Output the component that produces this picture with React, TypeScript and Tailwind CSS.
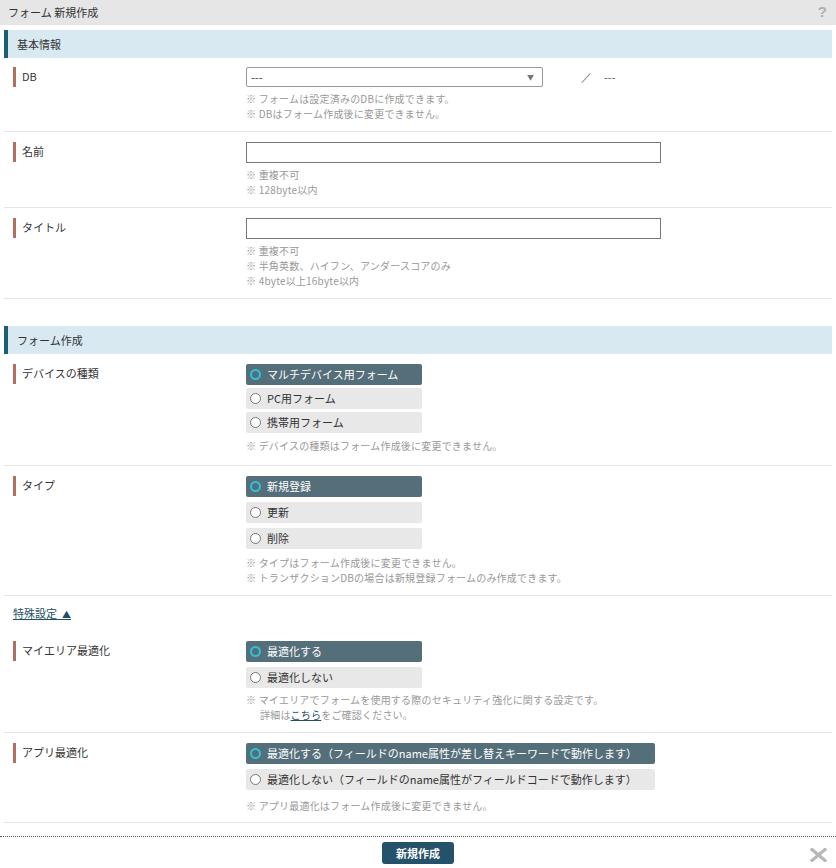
import React, { useState } from "react";

interface RadioOpt {
  label: string;
}

function Radio({
  label,
  checked,
  width,
  onClick,
}: {
  label: string;
  checked: boolean;
  width: string;
  onClick: () => void;
}) {
  return (
    <div
      onClick={onClick}
      className={`${width} h-[21px] flex items-center pl-[4px] rounded-[2px] cursor-pointer ${
        checked ? "bg-[#546e7a] text-white" : "bg-[#e8e8e8] text-[#333]"
      }`}
    >
      <span
        className={`w-[11px] h-[11px] rounded-full shrink-0 ${
          checked ? "border-2 border-[#2cc5d8] bg-transparent" : "border border-[#777] bg-white"
        }`}
      ></span>
      <span className="ml-[6px] leading-[21px]">{label}</span>
    </div>
  );
}

function Label({ text }: { text: string }) {
  return (
    <div className="w-[242px] pl-[9px] shrink-0">
      <div className="border-l-[3px] border-[#b26f5e] pl-[6px] h-[20px] leading-[19px]">{text}</div>
    </div>
  );
}

function Notes({ lines, mt = "mt-[4px]" }: { lines: React.ReactNode[]; mt?: string }) {
  return (
    <div className={`${mt} text-[10px] text-[#999] leading-[15px] tracking-[0.2px]`}>
      {lines.map((l, i) => (
        <div key={i}>{l}</div>
      ))}
    </div>
  );
}

function Section({ title, className = "" }: { title: string; className?: string }) {
  return (
    <div className={`h-[28px] bg-[#d9e9f1] border-l-4 border-[#1b5e74] pl-[9px] flex items-center ${className}`}>
      {title}
    </div>
  );
}

function RadioGroup({
  opts,
  width,
  gap,
}: {
  opts: RadioOpt[];
  width: string;
  gap: string;
}) {
  const [sel, setSel] = useState(0);
  return (
    <div className={`flex flex-col ${gap}`}>
      {opts.map((o, i) => (
        <Radio key={o.label} label={o.label} checked={sel === i} width={width} onClick={() => setSel(i)} />
      ))}
    </div>
  );
}

export default function App() {
  const [name, setName] = useState("");
  const [title, setTitle] = useState("");

  return (
    <div className="w-full min-h-screen bg-white text-[11px] text-[#333] font-['Noto_Sans_CJK_JP','Noto_Sans',sans-serif]">
      <div className="h-[25px] bg-[#e6e6e6] flex items-center justify-between pl-[8px] pr-[9px]">
        <span>フォーム 新規作成</span>
        <span className="text-[15px] font-bold text-[#b0b0b0] font-['Liberation_Sans',sans-serif]">?</span>
      </div>

      <div className="px-[4px] pt-[5px]">
        <Section title="基本情報" />

        <div className="flex border-b border-[#e5e5e5] pt-[9px] pb-[10px]">
          <Label text="DB" />
          <div>
            <div className="flex items-center">
              <div className="w-[297px] h-[20px] border border-[#999] rounded-[2px] flex items-center justify-between pl-[4px] pr-[8px]">
                <span>---</span>
                <span className="text-[7px] text-[#777]">▼</span>
              </div>
              <span className="ml-[38px] text-[#666] font-['Liberation_Sans',sans-serif]">／</span>
              <span className="ml-[12px] text-[#555]">---</span>
            </div>
            <Notes lines={["※ フォームは設定済みのDBに作成できます。", "※ DBはフォーム作成後に変更できません。"]} />
          </div>
        </div>

        <div className="flex border-b border-[#e5e5e5] pt-[10px] pb-[10px]">
          <Label text="名前" />
          <div>
            <input
              className="w-[415px] h-[21px] border border-[#777] outline-none px-[4px] block"
              value={name}
              onChange={(e) => setName(e.target.value)}
            />
            <Notes lines={["※ 重複不可", "※ 128byte以内"]} />
          </div>
        </div>

        <div className="flex border-b border-[#e5e5e5] pt-[10px] pb-[10px]">
          <Label text="タイトル" />
          <div>
            <input
              className="w-[415px] h-[21px] border border-[#777] outline-none px-[4px] block"
              value={title}
              onChange={(e) => setTitle(e.target.value)}
            />
            <Notes
              lines={["※ 重複不可", "※ 半角英数、ハイフン、アンダースコアのみ", "※ 4byte以上16byte以内"]}
            />
          </div>
        </div>

        <Section title="フォーム作成" className="mt-[27px]" />

        <div className="flex border-b border-[#e5e5e5] pt-[10px] pb-[12px]">
          <Label text="デバイスの種類" />
          <div>
            <RadioGroup
              width="w-[176px]"
              gap="gap-[3px]"
              opts={[{ label: "マルチデバイス用フォーム" }, { label: "PC用フォーム" }, { label: "携帯用フォーム" }]}
            />
            <Notes mt="mt-[5px]" lines={["※ デバイスの種類はフォーム作成後に変更できません。"]} />
          </div>
        </div>

        <div className="flex border-b border-[#e5e5e5] pt-[10px] pb-[10px]">
          <Label text="タイプ" />
          <div>
            <RadioGroup
              width="w-[176px]"
              gap="gap-[5px]"
              opts={[{ label: "新規登録" }, { label: "更新" }, { label: "削除" }]}
            />
            <Notes
              mt="mt-[6px]"
              lines={[
                "※ タイプはフォーム作成後に変更できません。",
                "※ トランザクションDBの場合は新規登録フォームのみ作成できます。",
              ]}
            />
          </div>
        </div>

        <div className="pl-[9px] pt-[10px] pb-[9px] leading-[15px]">
          <a href="#" className="text-[#1f4f63] underline whitespace-pre">
            {"特殊設定  "}
            <span className="text-[9px]">▲</span>
          </a>
        </div>

        <div className="flex border-b border-[#e5e5e5] pt-[10px] pb-[10px]">
          <Label text="マイエリア最適化" />
          <div>
            <RadioGroup
              width="w-[176px]"
              gap="gap-[5px]"
              opts={[{ label: "最適化する" }, { label: "最適化しない" }]}
            />
            <Notes
              lines={[
                "※ マイエリアでフォームを使用する際のセキュリティ強化に関する設定です。",
                <span className="pl-[14px]">
                  詳細は
                  <a href="#" className="text-[#1f4f63] underline">
                    こちら
                  </a>
                  をご確認ください。
                </span>,
              ]}
            />
          </div>
        </div>

        <div className="flex border-b border-[#e5e5e5] pt-[10px] pb-[9px]">
          <Label text="アプリ最適化" />
          <div>
            <RadioGroup
              width="w-[409px]"
              gap="gap-[5px]"
              opts={[
                { label: "最適化する（フィールドのname属性が差し替えキーワードで動作します）" },
                { label: "最適化しない（フィールドのname属性がフィールドコードで動作します）" },
              ]}
            />
            <Notes mt="mt-[8px]" lines={["※ アプリ最適化はフォーム作成後に変更できません。"]} />
          </div>
        </div>
      </div>

      <div className="relative mt-[13px] border-t border-dotted border-[#555] h-[33px] flex justify-center pt-[5px]">
        <button className="w-[72px] h-[22px] bg-[#24526a] rounded-[3px] text-white text-[11px] font-bold">
          新規作成
        </button>
        <svg
          className="absolute right-[9px] top-[11px]"
          width="17"
          height="14"
          viewBox="0 0 17 14"
        >
          <path d="M2 1.5 L15 12.5 M15 1.5 L2 12.5" stroke="#b8b8b8" strokeWidth="3.2" strokeLinecap="square" />
        </svg>
      </div>
    </div>
  );
}
